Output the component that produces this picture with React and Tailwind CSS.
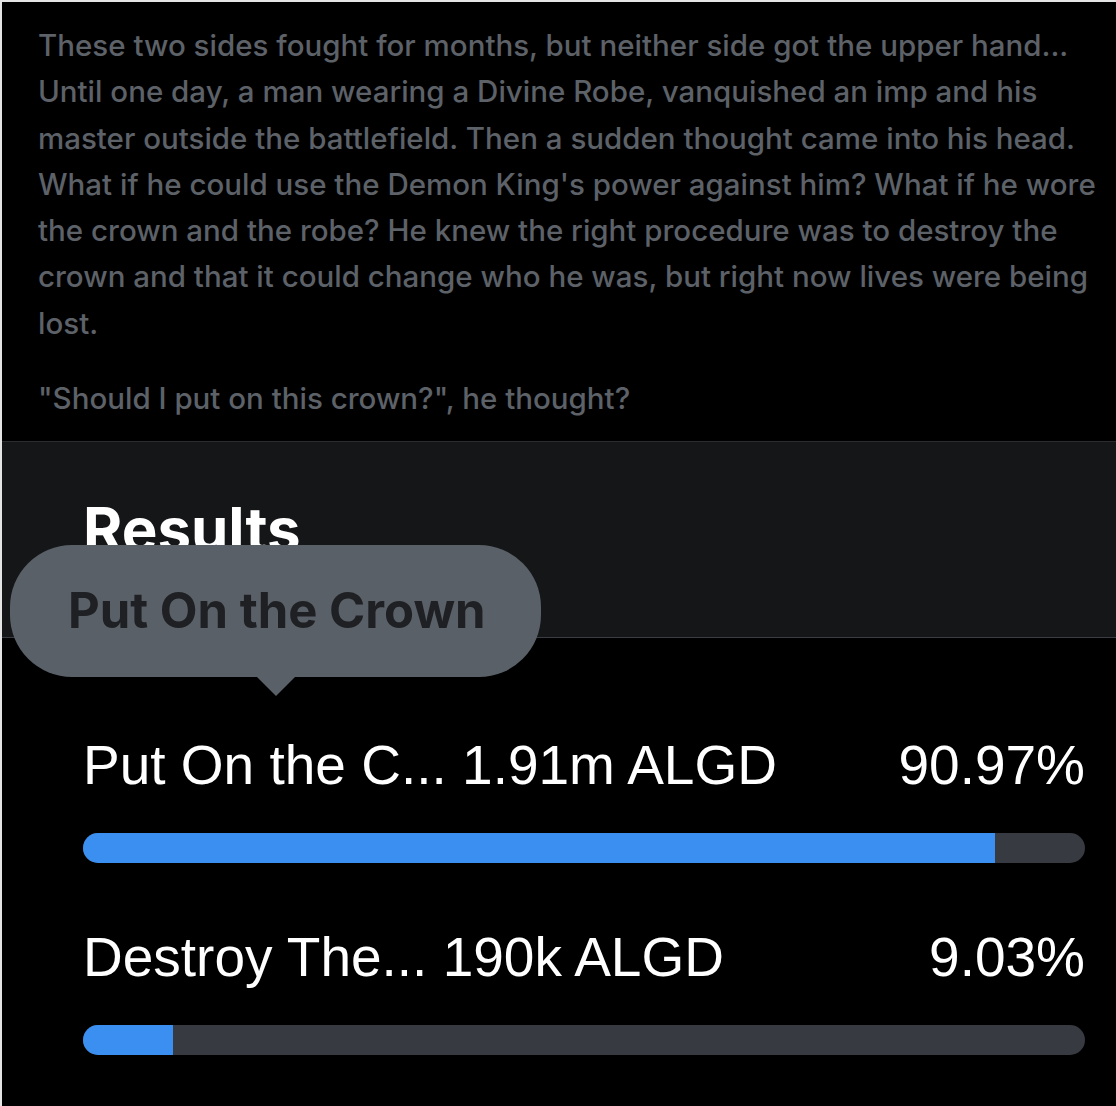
import React from "react";

const story =
  "These two sides fought for months, but neither side got the upper hand... Until one day, a man wearing a Divine Robe, vanquished an imp and his master outside the battlefield. Then a sudden thought came into his head. What if he could use the Demon King's power against him? What if he wore the crown and the robe? He knew the right procedure was to destroy the crown and that it could change who he was, but right now lives were being lost.";

const results = [
  { label: "Put On the C... 1.91m ALGD", pct: 90.97 },
  { label: "Destroy The... 190k ALGD", pct: 9.03 },
];

function ResultRow({ label, pct, first }) {
  return (
    <div className={first ? "" : "mt-[67px]"}>
      <div className="flex items-center justify-between text-[55px] leading-none text-white font-['Liberation_Sans',Arial,sans-serif]">
        <span>{label}</span>
        <span>{pct.toFixed(2)}%</span>
      </div>
      <div className="mt-[40px] h-[30px] w-full rounded-full bg-[#373a40] overflow-hidden">
        <div className="h-full bg-[#3a8ff0]" style={{ width: pct + "%" }}></div>
      </div>
    </div>
  );
}

export default function App() {
  return (
    <div className="relative w-[1116px] h-[1106px] overflow-hidden bg-black border-t-2 border-l-2 border-[#e4e4e4]">
      {/* story text */}
      <div className="pl-[36px] pr-[14px] pt-[20px] pb-[20px] text-[29.5px] leading-[46.3px] font-medium text-[#5d6168] font-['Inter',sans-serif]">
        <p>{story}</p>
        <p className="mt-[29px]">"Should I put on this crown?", he thought?</p>
      </div>

      {/* results header */}
      <div className="h-[197px] bg-[#151618] border-t border-b border-t-[#2a2c30] border-b-[#3a3d43] pl-[81px] pt-[57px]">
        <h2 className="text-[60px] leading-none font-bold text-white font-['Inter',sans-serif]">Results</h2>
      </div>

      {/* rows */}
      <div className="pl-[81px] pr-[31px] pt-[100px]">
        {results.map((r, i) => (
          <ResultRow key={r.label} label={r.label} pct={r.pct} first={i === 0} />
        ))}
      </div>

      {/* tooltip */}
      <div className="absolute left-[8px] top-[543px]">
        <div className="flex h-[132px] w-[531px] items-center rounded-[62px] bg-[#5a6068] pl-[58px] text-[49px] font-bold text-[#1e2023] font-['Inter',sans-serif]">
          Put On the Crown
        </div>
        <div className="ml-[247px] h-0 w-0 border-l-[19px] border-r-[19px] border-t-[19px] border-l-transparent border-r-transparent border-t-[#5a6068]"></div>
      </div>
    </div>
  );
}
